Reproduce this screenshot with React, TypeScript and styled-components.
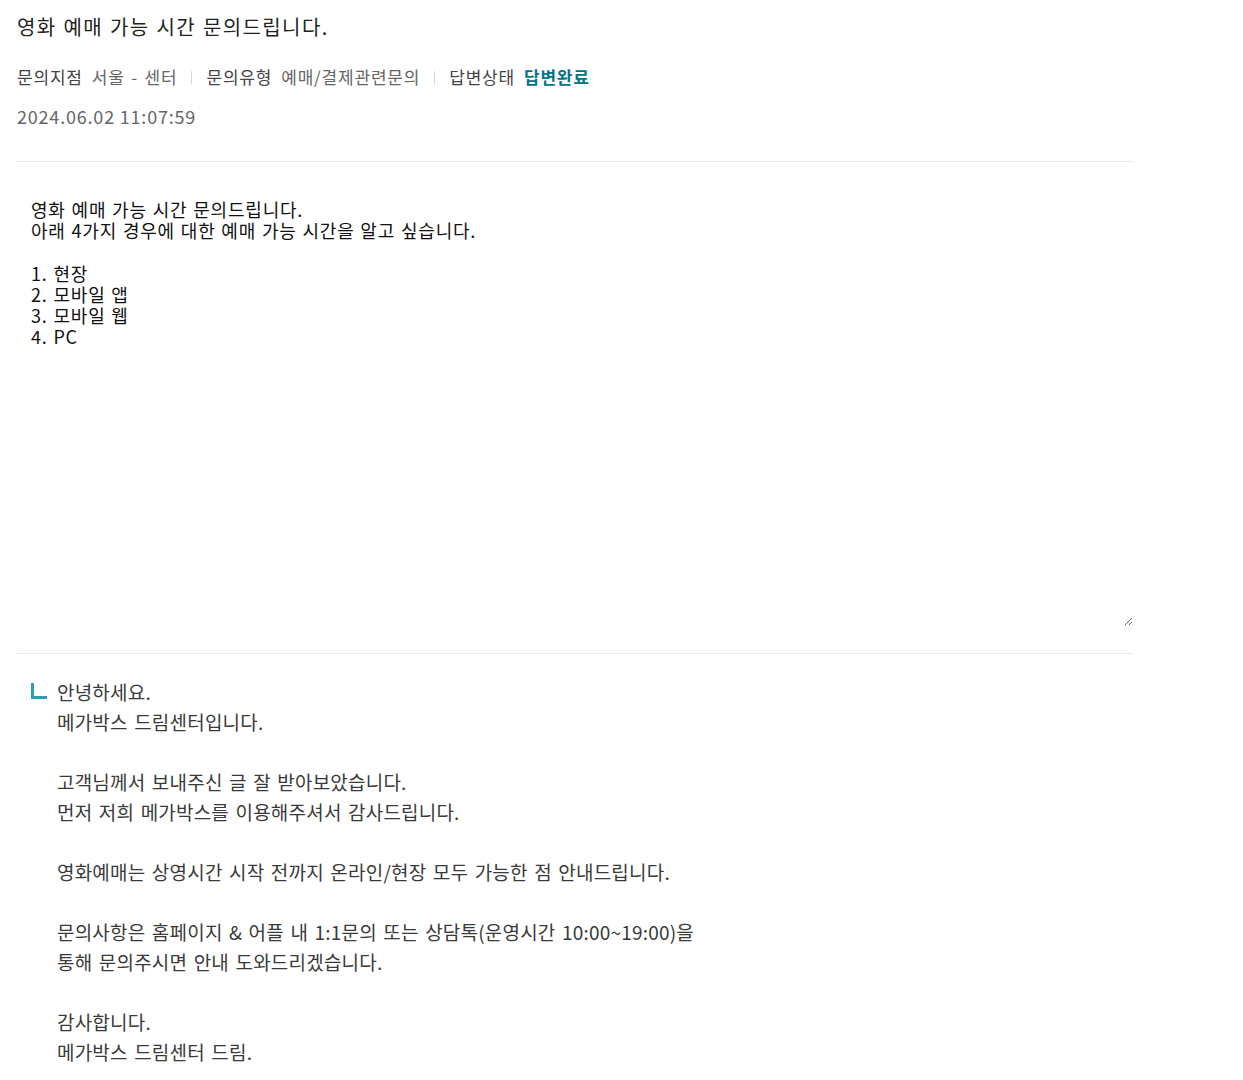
import styled, { createGlobalStyle } from 'styled-components'

const GlobalStyle = createGlobalStyle`
  body {
    margin: 0;
    background: #fff;
    font-family: "Noto Sans CJK KR", "Noto Sans", sans-serif;
    color: #222;
  }
`

const question = `영화 예매 가능 시간 문의드립니다.
아래 4가지 경우에 대한 예매 가능 시간을 알고 싶습니다.

1. 현장
2. 모바일 앱
3. 모바일 웹
4. PC`

const answer = [
  '안녕하세요.',
  '메가박스 드림센터입니다.',
  '',
  '고객님께서 보내주신 글 잘 받아보았습니다.',
  '먼저 저희 메가박스를 이용해주셔서 감사드립니다.',
  '',
  '영화예매는 상영시간 시작 전까지 온라인/현장 모두 가능한 점 안내드립니다.',
  '',
  '문의사항은 홈페이지 & 어플 내 1:1문의 또는 상담톡(운영시간 10:00~19:00)을',
  '통해 문의주시면 안내 도와드리겠습니다.',
  '',
  '감사합니다.',
  '메가박스 드림센터 드림.',
]

const App = () => {
  return (
    <Page>
      <GlobalStyle />
      <Header>
        <Title>영화 예매 가능 시간 문의드립니다.</Title>
        <Meta>
          <MetaItem>
            <Label>문의지점</Label>
            <Value>서울 - 센터</Value>
          </MetaItem>
          <Bar />
          <MetaItem>
            <Label>문의유형</Label>
            <Value>예매/결제관련문의</Value>
          </MetaItem>
          <Bar />
          <MetaItem>
            <Label>답변상태</Label>
            <Status>답변완료</Status>
          </MetaItem>
        </Meta>
        <DateText>2024.06.02 11:07:59</DateText>
      </Header>

      <QuestionBox>
        <QuestionArea readOnly defaultValue={question} />
      </QuestionBox>

      <Answer>
        <ReplyMark />
        <AnswerBody>
          {answer.map((line, i) => (
            <AnswerLine key={i}>{line || '\u00a0'}</AnswerLine>
          ))}
        </AnswerBody>
      </Answer>
    </Page>
  )
}

const Page = styled.div`
  width: 1116px;
  padding: 0 17px;
`
const Header = styled.div`
  padding-top: 12px;
  padding-bottom: 33px;
  border-bottom: 1px solid #e8e8e8;
`
const Title = styled.h1`
  margin: 0;
  font-size: 20px;
  font-weight: 400;
  line-height: 30px;
  color: #222;
  letter-spacing: 1.4px;
  word-spacing: 1px;
`
const Meta = styled.div`
  display: flex;
  align-items: center;
  margin-top: 24px;
  font-size: 17px;
  line-height: 22px;
  letter-spacing: 0.8px;
  word-spacing: 2px;
`
const MetaItem = styled.div`
  display: flex;
  gap: 9px;
`
const Label = styled.span`
  color: #444;
`
const Value = styled.span`
  color: #666;
`
const Status = styled.span`
  color: #01738b;
  font-weight: 700;
`
const Bar = styled.span`
  width: 1px;
  height: 13px;
  background: #d8d8d8;
  margin: 0 14px;
`
const DateText = styled.div`
  margin-top: 16px;
  font-size: 18px;
  line-height: 24px;
  color: #666;
  letter-spacing: 0.8px;
`
const QuestionBox = styled.div`
  padding: 23px 0 27px;
  border-bottom: 1px solid #e8e8e8;
`
const QuestionArea = styled.textarea`
  display: block;
  box-sizing: border-box;
  width: 100%;
  height: 441px;
  padding: 14px 14px;
  border: none;
  outline: none;
  resize: vertical;
  font-family: "Noto Sans CJK KR", "Noto Sans", sans-serif;
  font-size: 18px;
  line-height: 21.2px;
  color: #111;
  letter-spacing: 0.8px;
  word-spacing: 1px;
  background: #fff;
`
const Answer = styled.div`
  display: flex;
  gap: 10px;
  padding: 23px 14px 0;
`
const ReplyMark = styled.span`
  flex: none;
  width: 13px;
  height: 13px;
  margin-top: 6px;
  border-left: 3px solid #2e9fb0;
  border-bottom: 3px solid #2e9fb0;
`
const AnswerBody = styled.div`
  font-size: 19px;
  line-height: 30px;
  color: #3a3a3a;
  letter-spacing: 0.2px;
  word-spacing: 2px;
`
const AnswerLine = styled.div``

export default App
